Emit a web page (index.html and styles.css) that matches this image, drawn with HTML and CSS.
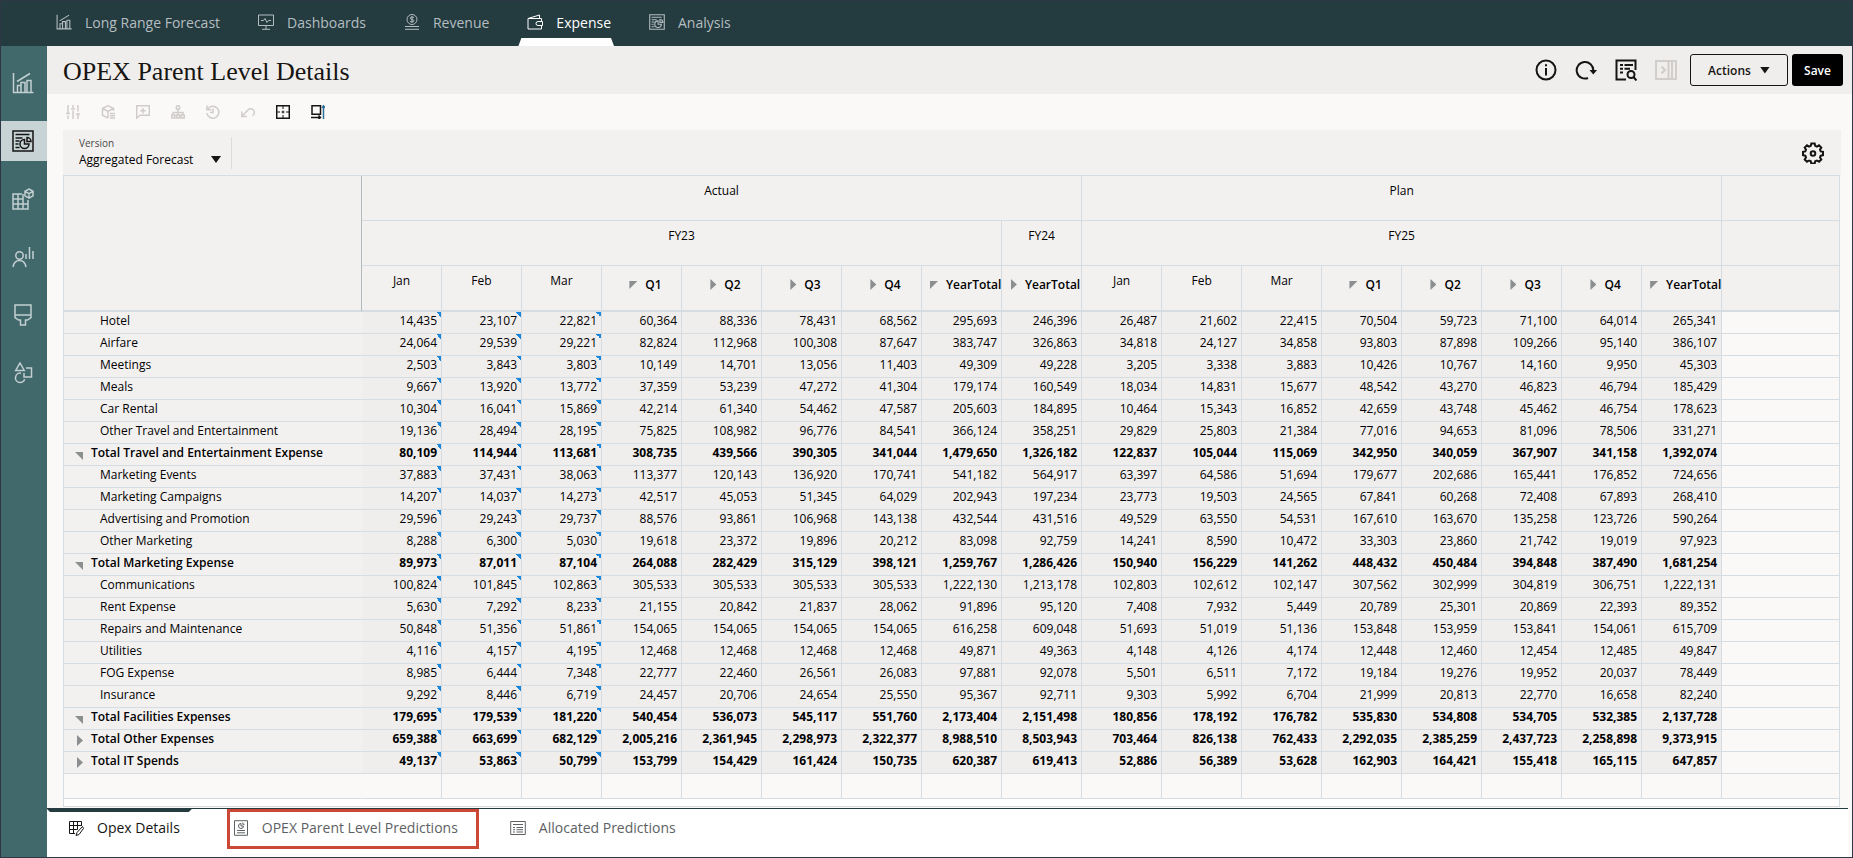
FILE: index.html
```
<!DOCTYPE html>
<html lang="en">
<head>
  <meta charset="UTF-8">
  <title>OPEX Parent Level Details</title>
  <link rel="stylesheet" href="styles.css">
</head>
<body>

  <!-- Shared icons -->
  <svg class="sprite" aria-hidden="true">
    <symbol id="i-chart" viewBox="0 0 22 22">
      <path d="M1.500 1v19.500h20M5.500 20v-6.500h3.500V20M9 20v-9.500h4V20M15 20V8.500h4V20M5 9.500L18 1.500"/>
    </symbol>
    <symbol id="i-report" viewBox="0 0 22 22">
      <path d="M1 1h20v20H1zM3.500 4.500h14M3.500 8h7M3.500 11h4M3.500 14h3M3.500 17.500h4M12.500 9.500a4.500 4.500 0 1 0 4.500 4.500h-4.500zM15 7.500v4h4a4 4 0 0 0-4-4z"/>
    </symbol>
    <symbol id="i-cubes" viewBox="0 0 22 22">
      <path d="M10 6H1v15h15v-9M1 11h10M1 16h15M6 6v15M11 6v15M17 1l4 2.300v4.600l-4 2.300-4-2.300V3.300zM13 3.300l4 2.300 4-2.300M17 5.600v4.500"/>
    </symbol>
    <symbol id="i-people" viewBox="0 0 22 22">
      <circle cx="7.500" cy="9.500" r="3.700"/>
      <path d="M1 21c.8-4.500 3.300-6.500 6.500-6.500s5.700 2 6.500 6.500M14 8v5M17.500 1v12M21 5v8"/>
    </symbol>
    <symbol id="i-brush" viewBox="0 0 22 22">
      <path d="M3 1h16v12.500l-3.500 2.500h-2v5h-5v-5h-2L3 13.500zM3 11h16"/>
    </symbol>
    <symbol id="i-shapes" viewBox="0 0 22 22">
      <path d="M8 1l4.300 7.500H3.700zM14 6h5.500v9h-7.500v-4M9 11.200a4.700 4.700 0 1 0 3.700 6"/>
    </symbol>
    <symbol id="i-monitor" viewBox="0 0 16 16">
      <path d="M.5 1h15v10.500H.5zM8 11.500V15M4 15.300h8M3 6.500h2.500l1.500-2 2 4 1.500-2H13"/>
    </symbol>
    <symbol id="i-coin" viewBox="0 0 16 16">
      <circle cx="8" cy="5.500" r="5"/>
      <path d="M1 12.500h14M1 15.300h14M10 3.600c-1-.8-3.800-.8-3.800.6 0 1.600 3.800 1 3.800 2.600 0 1.400-3 1.400-4 .4M8 2v7"/>
    </symbol>
    <symbol id="i-wallet" viewBox="0 0 16 16">
      <path d="M1 4.500h13.500v3M14.500 11.500v3.500H1V4.500L12.500 1v3.500M15.500 7.500H11a2 2 0 0 0 0 4h4.500z"/>
    </symbol>
    <symbol id="i-sliders" viewBox="0 0 14 14">
      <path d="M2 0v8M2 10.500V14M0 8.500h4M7 0v3M7 5.500V14M5 4h4M12 0v6.500M12 9v5M10 9h4"/>
    </symbol>
    <symbol id="i-box" viewBox="0 0 14 14">
      <path d="M12.500 6V3.500L7 .7 1.500 3.500v6.800L7 13M1.500 3.500L7 6.500l5.500-3M7 6.500V13M9 8.500h5M9 10.800h5M9 13h5"/>
    </symbol>
    <symbol id="i-comment" viewBox="0 0 14 14">
      <path d="M.7.700h12.600v9.600H4L.7 13.300zM7 3v5.500M4.200 5.700h5.600"/>
    </symbol>
    <symbol id="i-tree" viewBox="0 0 14 14">
      <circle cx="7" cy="2.500" r="1.800"/>
      <path d="M7 4.500V10M2 10V7.500h10V10M.7 10h3v3h-3zM5.500 10h3v3h-3zM10.300 10h3v3h-3z"/>
    </symbol>
    <symbol id="i-history" viewBox="0 0 14 14">
      <path d="M1.500 4.500a6 6 0 1 1-.6 3.500M1 .5v4.300h4.300M7 3.500v4h-3"/>
    </symbol>
    <symbol id="i-undo" viewBox="0 0 14 14">
      <path d="M.8 6.500v5h5M1 11.200L7 5a3.600 3.600 0 1 1 4.500 5.500"/>
    </symbol>
    <symbol id="i-cells" viewBox="0 0 14 14">
      <path d="M.7.700h12.600v12.600H.7z"/>
      <path class="thin" d="M7 1v3M7 5.500v3M7 10v3M1 7h3M5.500 7h3M10 7h3"/>
    </symbol>
    <symbol id="i-resize" viewBox="0 0 14 14">
      <path d="M1 .7h8.500v8.600H1zM0 12.500h9M7.500 10.500l2 2-2 1.500"/>
      <path class="accent" d="M12.500 14V1M11 2.800L12.500.8 14 2.800"/>
    </symbol>
    <symbol id="i-info" viewBox="0 0 22 22">
      <circle cx="11" cy="11" r="9.500"/>
      <path d="M11 9v7.500M11 5.200v2"/>
    </symbol>
    <symbol id="i-refresh" viewBox="0 0 22 22">
      <path d="M13 19a8.300 8.300 0 1 1 5.300-7.500"/>
      <path class="solid" d="M14.500 11h7.500l-3.700 4.500z"/>
    </symbol>
    <symbol id="i-find" viewBox="0 0 22 22">
      <path d="M11 20.500H1.500v-19h19V11M5 6h3M9.500 6H18M5 9.700h3M9.500 9.700H15M5 13.500h3"/>
      <circle cx="16" cy="15.500" r="3.500"/>
      <path d="M18.500 18l3 3.500"/>
    </symbol>
    <symbol id="i-panel" viewBox="0 0 22 22">
      <path d="M1 2h20v18H1zM13.500 2v18M17 2v18M6.500 7.500L10 11l-3.500 3.500"/>
    </symbol>
    <symbol id="i-gear" viewBox="0 0 22 22">
      <path d="M9.300 1.500h3.400l.5 2.400 1.700.7 2.100-1.300 2.300 2.300-1.300 2.100.7 1.700 2.300.4v3.400l-2.300.5-.7 1.700 1.300 2.100-2.300 2.300-2.100-1.300-1.700.7-.5 2.300H9.300l-.5-2.300-1.700-.7L5 19.800l-2.300-2.300L4 15.400l-.7-1.700L1 13.200V9.800l2.300-.4L4 7.700 2.700 5.600 5 3.300l2.100 1.300 1.700-.7z"/>
      <circle cx="11" cy="11.500" r="2.300"/>
    </symbol>
    <symbol id="i-gridedit" viewBox="0 0 16 16">
      <path d="M7 13.500H1.500v-12h12V6M1.500 5.500h12M1.500 9.500h8M5.500 1.500v12M9.500 1.500v8M14.500 6.500l-5.500 6-1 3 3-1 4.500-6z"/>
    </symbol>
    <symbol id="i-page" viewBox="0 0 16 16">
      <path d="M1.500.700h13v14.600h-13zM4 10.500h8M4 12.800h8M8 3.500a2.500 2.500 0 1 0 2.500 2.500H8zM9.800 2.500v1.800h1.700"/>
    </symbol>
    <symbol id="i-list" viewBox="0 0 16 16">
      <path d="M.7 1.500h14.600v13H.7zM3 4.500h10M3 7.500h2M6.500 7.500H13M3 9.700h2M6.500 9.700H13M3 12h2M6.500 12H13"/>
    </symbol>
  </svg>

  <header class="topnav">
    <a href="#"><svg class="fine"><use href="#i-chart"/></svg>Long Range Forecast</a>
    <a href="#"><svg><use href="#i-monitor"/></svg>Dashboards</a>
    <a href="#"><svg><use href="#i-coin"/></svg>Revenue</a>
    <a href="#" class="active"><svg><use href="#i-wallet"/></svg>Expense</a>
    <a href="#"><svg class="fine"><use href="#i-report"/></svg>Analysis</a>
  </header>

  <div class="body">
    <nav class="sidebar">
      <a href="#" aria-label="Forecast"><svg><use href="#i-chart"/></svg></a>
      <a href="#" aria-label="Reports" class="active"><svg><use href="#i-report"/></svg></a>
      <a href="#" aria-label="Cubes"><svg><use href="#i-cubes"/></svg></a>
      <a href="#" aria-label="Drivers"><svg><use href="#i-people"/></svg></a>
      <a href="#" aria-label="Appearance"><svg><use href="#i-brush"/></svg></a>
      <a href="#" aria-label="Objects"><svg><use href="#i-shapes"/></svg></a>
    </nav>

    <main>
      <div class="titlebar">
        <h1>OPEX Parent Level Details</h1>
        <div class="title-icons">
          <button aria-label="Information"><svg><use href="#i-info"/></svg></button>
          <button aria-label="Refresh"><svg><use href="#i-refresh"/></svg></button>
          <button aria-label="Find"><svg><use href="#i-find"/></svg></button>
          <button aria-label="Open panel" disabled><svg><use href="#i-panel"/></svg></button>
        </div>
        <button class="btn-actions">Actions <i class="caret"></i></button>
        <button class="btn-save">Save</button>
      </div>

      <div class="toolbar">
        <button aria-label="Adjust" disabled><svg><use href="#i-sliders"/></svg></button>
        <button aria-label="Supporting detail" disabled><svg><use href="#i-box"/></svg></button>
        <button aria-label="Comments" disabled><svg><use href="#i-comment"/></svg></button>
        <button aria-label="Hierarchy" disabled><svg><use href="#i-tree"/></svg></button>
        <button aria-label="History" disabled><svg><use href="#i-history"/></svg></button>
        <button aria-label="Undo" disabled><svg><use href="#i-undo"/></svg></button>
        <button aria-label="Grid lines"><svg><use href="#i-cells"/></svg></button>
        <button aria-label="Resize"><svg><use href="#i-resize"/></svg></button>
      </div>

      <div class="content">
        <div class="pov">
          <div class="pov-field">
            <label for="version">Version</label>
            <select id="version">
              <option>Aggregated Forecast</option>
            </select>
            <i class="caret"></i>
          </div>
          <button class="btn-gear" aria-label="Settings"><svg><use href="#i-gear"/></svg></button>
        </div>

        <div class="grid-wrap">
          <table id="grid">
            <colgroup>
              <col class="col-label">
              <col class="col-value" span="17">
              <col>
            </colgroup>
            <thead>
              <tr>
                <th class="corner" rowspan="3"></th>
                <th colspan="9">Actual</th>
                <th colspan="8">Plan</th>
                <th></th>
              </tr>
              <tr>
                <th colspan="8">FY23</th>
                <th>FY24</th>
                <th colspan="8">FY25</th>
                <th></th>
              </tr>
              <tr id="periods"></tr>
            </thead>
            <tbody></tbody>
          </table>
        </div>
      </div>

      <nav class="tabs">
        <a href="#" class="active"><svg><use href="#i-gridedit"/></svg>Opex Details</a>
        <a href="#" class="highlight"><svg><use href="#i-page"/></svg>OPEX Parent Level Predictions</a>
        <a href="#"><svg><use href="#i-list"/></svg>Allocated Predictions</a>
      </nav>
    </main>
  </div>

  <script>
    // "-" is an expanded member, "+" a collapsed one
    const periods = ["Jan", "Feb", "Mar", "-Q1", "+Q2", "+Q3", "+Q4", "-YearTotal", "+YearTotal",
                     "Jan", "Feb", "Mar", "-Q1", "+Q2", "+Q3", "+Q4", "-YearTotal"];

    const rows = [
      ["Hotel", "14,435 23,107 22,821 60,364 88,336 78,431 68,562 295,693 246,396 26,487 21,602 22,415 70,504 59,723 71,100 64,014 265,341"],
      ["Airfare", "24,064 29,539 29,221 82,824 112,968 100,308 87,647 383,747 326,863 34,818 24,127 34,858 93,803 87,898 109,266 95,140 386,107"],
      ["Meetings", "2,503 3,843 3,803 10,149 14,701 13,056 11,403 49,309 49,228 3,205 3,338 3,883 10,426 10,767 14,160 9,950 45,303"],
      ["Meals", "9,667 13,920 13,772 37,359 53,239 47,272 41,304 179,174 160,549 18,034 14,831 15,677 48,542 43,270 46,823 46,794 185,429"],
      ["Car Rental", "10,304 16,041 15,869 42,214 61,340 54,462 47,587 205,603 184,895 10,464 15,343 16,852 42,659 43,748 45,462 46,754 178,623"],
      ["Other Travel and Entertainment", "19,136 28,494 28,195 75,825 108,982 96,776 84,541 366,124 358,251 29,829 25,803 21,384 77,016 94,653 81,096 78,506 331,271"],
      ["-Total Travel and Entertainment Expense", "80,109 114,944 113,681 308,735 439,566 390,305 341,044 1,479,650 1,326,182 122,837 105,044 115,069 342,950 340,059 367,907 341,158 1,392,074"],
      ["Marketing Events", "37,883 37,431 38,063 113,377 120,143 136,920 170,741 541,182 564,917 63,397 64,586 51,694 179,677 202,686 165,441 176,852 724,656"],
      ["Marketing Campaigns", "14,207 14,037 14,273 42,517 45,053 51,345 64,029 202,943 197,234 23,773 19,503 24,565 67,841 60,268 72,408 67,893 268,410"],
      ["Advertising and Promotion", "29,596 29,243 29,737 88,576 93,861 106,968 143,138 432,544 431,516 49,529 63,550 54,531 167,610 163,670 135,258 123,726 590,264"],
      ["Other Marketing", "8,288 6,300 5,030 19,618 23,372 19,896 20,212 83,098 92,759 14,241 8,590 10,472 33,303 23,860 21,742 19,019 97,923"],
      ["-Total Marketing Expense", "89,973 87,011 87,104 264,088 282,429 315,129 398,121 1,259,767 1,286,426 150,940 156,229 141,262 448,432 450,484 394,848 387,490 1,681,254"],
      ["Communications", "100,824 101,845 102,863 305,533 305,533 305,533 305,533 1,222,130 1,213,178 102,803 102,612 102,147 307,562 302,999 304,819 306,751 1,222,131"],
      ["Rent Expense", "5,630 7,292 8,233 21,155 20,842 21,837 28,062 91,896 95,120 7,408 7,932 5,449 20,789 25,301 20,869 22,393 89,352"],
      ["Repairs and Maintenance", "50,848 51,356 51,861 154,065 154,065 154,065 154,065 616,258 609,048 51,693 51,019 51,136 153,848 153,959 153,841 154,061 615,709"],
      ["Utilities", "4,116 4,157 4,195 12,468 12,468 12,468 12,468 49,871 49,363 4,148 4,126 4,174 12,448 12,460 12,454 12,485 49,847"],
      ["FOG Expense", "8,985 6,444 7,348 22,777 22,460 26,561 26,083 97,881 92,078 5,501 6,511 7,172 19,184 19,276 19,952 20,037 78,449"],
      ["Insurance", "9,292 8,446 6,719 24,457 20,706 24,654 25,550 95,367 92,711 9,303 5,992 6,704 21,999 20,813 22,770 16,658 82,240"],
      ["-Total Facilities Expenses", "179,695 179,539 181,220 540,454 536,073 545,117 551,760 2,173,404 2,151,498 180,856 178,192 176,782 535,830 534,808 534,705 532,385 2,137,728"],
      ["+Total Other Expenses", "659,388 663,699 682,129 2,005,216 2,361,945 2,298,973 2,322,377 8,988,510 8,503,943 703,464 826,138 762,433 2,292,035 2,385,259 2,437,723 2,258,898 9,373,915"],
      ["+Total IT Spends", "49,137 53,863 50,799 153,799 154,429 161,424 150,735 620,387 619,413 52,886 56,389 53,628 162,903 164,421 155,418 165,115 647,857"]
    ];

    function memberLabel(name) {
      if (name[0] === "-") return `<i class="tri open"></i>${name.slice(1)}`;
      if (name[0] === "+") return `<i class="tri closed"></i>${name.slice(1)}`;
      return name;
    }

    function isParent(name) {
      return name[0] === "-" || name[0] === "+";
    }

    document.getElementById("periods").innerHTML = periods.map(p =>
      `<th class="${isParent(p) ? "parent" : ""}">${memberLabel(p)}</th>`
    ).join("") + "<th></th>";

    const tbody = document.querySelector("#grid tbody");
    rows.forEach(([name, values]) => {
      const row = document.createElement("tr");
      if (isParent(name)) row.className = "total";
      // the first three actual months carry the blue corner mark
      row.innerHTML = `<th scope="row">${memberLabel(name)}</th>` +
        values.split(" ").map((v, i) => `<td class="${i < 3 ? "noted" : ""}">${v}</td>`).join("") +
        `<td class="blank"></td>`;
      tbody.appendChild(row);
    });

    const filler = document.createElement("tr");
    filler.className = "filler";
    filler.innerHTML = "<td></td>".repeat(19);
    tbody.appendChild(filler);
  </script>
</body>
</html>
```
FILE: styles.css
```
* {
  box-sizing: border-box;
}

body {
  margin: 0;
  min-height: 100vh;
  display: flex;
  flex-direction: column;
  border: 1px solid #2f3645;
  background-color: #fbf9f8;
  color: #161513;
  font-family: "Open Sans", "Noto Sans", sans-serif;
  font-size: 12px;
}

a {
  color: inherit;
  text-decoration: none;
}

button {
  font-family: inherit;
  color: inherit;
  background: none;
  border: none;
  padding: 0;
  cursor: pointer;
}

svg {
  display: block;
  fill: none;
  stroke: currentColor;
  stroke-width: 1.5;
}

.sprite {
  display: none;
}

.solid {
  fill: currentColor;
  stroke: none;
}

.accent {
  stroke: #2d6f9c;
}

.thin {
  stroke-width: 1;
}

.caret {
  display: block;
  width: 10px;
  height: 7px;
  background-color: #161513;
  clip-path: polygon(0 0, 100% 0, 50% 100%);
}

/* Top navigation */
.topnav {
  display: flex;
  gap: 38px;
  height: 45px;
  padding: 0 55px;
  background-color: #243b40;
  color: #b4bec0;
  font-size: 14px;
}

.topnav a {
  position: relative;
  display: flex;
  align-items: center;
  gap: 13px;
  padding-bottom: 3px;
}

.topnav svg {
  width: 16px;
  height: 16px;
  stroke-width: 1;
}

.topnav svg.fine {
  stroke-width: 1.5;
}

.topnav .active {
  color: white;
}

.topnav .active::after {
  content: "";
  position: absolute;
  left: -9px;
  right: -3px;
  bottom: 0;
  height: 8px;
  background-color: white;
  clip-path: polygon(3px 0, calc(100% - 3px) 0, 100% 100%, 0 100%);
}

.body {
  flex: 1;
  display: flex;
}

/* Left side icons */
.sidebar {
  flex: none;
  width: 46px;
  display: flex;
  flex-direction: column;
  gap: 18px;
  padding-top: 17px;
  background-color: #41686b;
  color: #c3cfd1;
}

.sidebar a {
  display: flex;
  align-items: center;
  justify-content: center;
  height: 40px;
  padding-right: 2px;
}

.sidebar svg {
  width: 22px;
  height: 22px;
}

.sidebar .active {
  background-color: #c7d3d5;
  color: #161513;
}

main {
  flex: 1;
  min-width: 0;
  display: flex;
  flex-direction: column;
}

/* Title */
.titlebar {
  display: flex;
  align-items: center;
  height: 48px;
  padding: 0 9px 0 16px;
  background-color: #f0eeec;
}

h1 {
  flex: 1;
  margin: 0;
  padding-top: 4px;
  font-family: "Liberation Serif", serif;
  font-size: 26px;
  font-weight: normal;
}

.title-icons {
  display: flex;
  gap: 18px;
  margin-right: 13px;
}

.title-icons svg {
  width: 22px;
  height: 22px;
  stroke-width: 2;
}

.title-icons :disabled {
  color: #d0cdca;
}

.btn-actions,
.btn-save {
  height: 32px;
  border-radius: 3px;
  font-size: 12px;
  font-weight: 600;
}

.btn-actions {
  display: flex;
  align-items: center;
  justify-content: center;
  gap: 9px;
  width: 98px;
  margin-right: 4px;
  border: 1px solid #161513;
}

.btn-save {
  width: 51px;
  background-color: black;
  color: white;
}

/* Toolbar */
.toolbar {
  display: flex;
  align-items: center;
  gap: 21px;
  height: 36px;
  padding: 0 19px;
}

.toolbar svg {
  width: 14px;
  height: 14px;
}

.toolbar :disabled {
  color: #cfccca;
}

.content {
  padding: 0 11px 1px 16px;
}

/* Page selector above the grid */
.pov {
  display: flex;
  align-items: center;
  justify-content: space-between;
  height: 45px;
  padding: 0 17px 0 16px;
  background-color: #f3f1f0;
}

.pov-field {
  display: grid;
  grid-template-columns: 132px 10px;
  align-items: center;
  row-gap: 2px;
  width: 153px;
  border-right: 1px solid #dedcda;
}

.pov-field label {
  grid-column: 1 / -1;
  color: #4a4846;
  font-size: 10px;
  line-height: 12px;
}

.pov-field select {
  appearance: none;
  border: none;
  padding: 0;
  background: none;
  color: black;
  font-family: inherit;
  font-size: 12px;
  line-height: 18px;
}

.btn-gear svg {
  width: 22px;
  height: 22px;
  stroke-width: 2;
}

/* Data grid */
.grid-wrap {
  margin-right: 1px;
  padding-bottom: 7px;
  overflow-x: auto;
  border: 1px solid #d5dde3;
  background-color: white;
}

#grid {
  width: 100%;
  table-layout: fixed;
  border-collapse: separate;
  border-spacing: 0;
}

.col-label {
  width: 298px;
}

.col-value {
  width: 80px;
}

#grid th,
#grid td {
  height: 22px;
  padding: 0 4px 3px 0;
  border-right: 1px solid #d5dde3;
  border-bottom: 1px solid #d5dde3;
  line-height: 16px;
  white-space: nowrap;
  color: black;
}

#grid th:last-child,
#grid td:last-child {
  border-right: none;
}

#grid thead th {
  height: 45px;
  padding: 7px 0 0;
  background-color: #f3f1f0;
  font-weight: normal;
  text-align: center;
  vertical-align: top;
}

#grid #periods th,
#grid thead .corner {
  height: 46px;
  border-bottom-width: 2px;
}

#grid thead .corner {
  border-right-color: #b3babd;
}

#grid #periods .parent {
  padding: 11px 0 0 8px;
  font-weight: 600;
}

#grid tbody th {
  padding-left: 36px;
  border-right: none;
  background-color: #f3f1f0;
  font-weight: normal;
  text-align: left;
}

#grid tbody td {
  background-color: #f0eeed;
  text-align: right;
}

#grid tbody .noted {
  background-image: linear-gradient(to top right, transparent 50%, #1a86dc 50%);
  background-repeat: no-repeat;
  background-position: top right;
  background-size: 5px 5px;
}

#grid tbody .total td {
  font-weight: bold;
}

#grid tbody .total th {
  padding-left: 11px;
  font-weight: 600;
}

#grid tbody .blank,
#grid tbody .filler td {
  background-color: #fbf9f8;
}

#grid tbody .filler td {
  height: 25px;
}

#grid tbody .filler td:first-child {
  border-right-color: transparent;
}

.tri {
  display: inline-block;
  width: 8px;
  height: 8px;
  margin-right: 8px;
  background-color: #8b8f90;
}

.tri.open {
  clip-path: polygon(0 0, 100% 0, 0 100%);
}

.tri.closed {
  width: 6px;
  height: 11px;
  vertical-align: -1px;
  clip-path: polygon(0 0, 100% 50%, 0 100%);
}

tbody .tri {
  vertical-align: -3px;
}

tbody .tri.open {
  clip-path: polygon(0 0, 100% 0, 100% 100%);
}

tbody .tri.closed {
  margin: 0 8px 0 2px;
  vertical-align: -3px;
}

/* Bottom tabs */
.tabs {
  flex: 1;
  display: flex;
  align-items: flex-start;
  margin-right: 4px;
  border-top: 1px solid #243b40;
  background-color: white;
  color: #5d6163;
  font-size: 14px;
}

.tabs a {
  position: relative;
  display: flex;
  align-items: center;
  gap: 13px;
  height: 40px;
  padding-bottom: 3px;
}

.tabs svg {
  width: 16px;
  height: 16px;
  stroke-width: 1;
}

.tabs .active {
  margin-right: 35px;
  padding: 0 12px 3px 21px;
  color: #161513;
}

.tabs .active::before {
  content: "";
  position: absolute;
  left: 0;
  right: 0;
  top: 0;
  height: 3px;
  background-color: #243b40;
  clip-path: polygon(0 0, 100% 0, calc(100% - 3px) 100%, 3px 100%);
}

.tabs .highlight {
  margin-right: 31px;
  padding: 0 18px 3px 3px;
  border: 3px solid #cc4836;
}
```
